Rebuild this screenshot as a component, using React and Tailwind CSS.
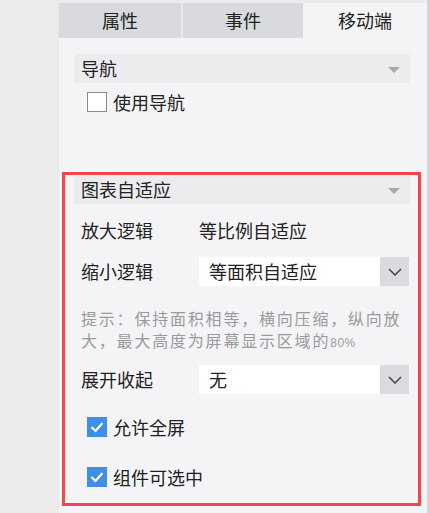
import React from "react";

const font = { fontFamily: '"Noto Sans CJK SC", "Noto Sans", sans-serif' };

function Triangle() {
  return (
    <svg width="12" height="7" viewBox="0 0 12 7" className="mr-[10px] mt-[4px]">
      <polygon points="0,0 12,0 6,6" fill="#a9a9ab" />
    </svg>
  );
}

function Chevron() {
  return (
    <svg width="14" height="8" viewBox="0 0 14 8">
      <polyline points="1,1 7,7 13,1" fill="none" stroke="#4a4a4a" strokeWidth="1.6" />
    </svg>
  );
}

function Select({ value }) {
  return (
    <div className="flex h-[29px] w-[210px]">
      <div className="flex-1 bg-white flex items-center pl-[10px] text-[18px] text-[#222]">{value}</div>
      <div className="w-[29px] bg-[#dadbdf] flex items-center justify-center">
        <Chevron />
      </div>
    </div>
  );
}

function CheckBox({ checked }) {
  if (checked) {
    return (
      <div className="w-[20px] h-[20px] bg-[#3d8fe8] flex items-center justify-center">
        <svg width="14" height="12" viewBox="0 0 14 12">
          <polyline points="1.5,6 5.5,10 12.5,2" fill="none" stroke="white" strokeWidth="2.2" />
        </svg>
      </div>
    );
  }
  return <div className="w-[20px] h-[20px] bg-white border border-[#8a8a8a]" />;
}

export default function App() {
  return (
    <div className="flex w-[429px] h-[513px] bg-[#ebebeb] overflow-hidden" style={font}>
      <div className="w-[59px] shrink-0" />
      <div className="w-[368px] shrink-0 flex flex-col pt-[3px]">
        <div className="flex h-[35px] text-[18px] text-[#222]">
          <div className="w-[122px] bg-[#d9dadd] flex items-center justify-center">属性</div>
          <div className="w-[2px] bg-[#e9e9ec]" />
          <div className="w-[120px] bg-[#d9dadd] flex items-center justify-center">事件</div>
          <div className="flex-1 bg-[#f4f4f6] flex items-center justify-center">移动端</div>
        </div>
        <div className="flex-1 bg-[#f4f4f6] flex flex-col pt-[16px]">
          <div className="ml-[15px] mr-[17px] h-[29px] bg-[#ececee] flex items-center justify-between pl-[7px] text-[18px] text-[#222]">
            <span>导航</span>
            <Triangle />
          </div>
          <div className="flex items-center ml-[28px] mt-[9px] h-[20px] gap-[6px] text-[18px] text-[#222]">
            <CheckBox checked={false} />
            <span>使用导航</span>
          </div>
          <div className="ml-[3px] mr-[6px] mt-[60px] h-[334px] border-[3px] border-[#f7434a] flex flex-col text-[18px] text-[#222]">
            <div className="ml-[9px] mr-[8px] h-[29px] bg-[#ececee] flex items-center justify-between pl-[7px]">
              <span>图表自适应</span>
              <Triangle />
            </div>
            <div className="flex items-center h-[29px] mt-[12px] pl-[16px]">
              <span className="w-[118px]">放大逻辑</span>
              <span>等比例自适应</span>
            </div>
            <div className="flex items-center h-[29px] mt-[12px] pl-[16px]">
              <span className="w-[118px]">缩小逻辑</span>
              <Select value="等面积自适应" />
            </div>
            <div className="mt-[21px] ml-[16px] h-[44px] whitespace-nowrap text-[16px] leading-[22px] tracking-[1.8px] text-[#9a9a9c]">
              提示：保持面积相等，横向压缩，纵向放
              <br />
              大，最大高度为屏幕显示区域的<span className="text-[12px] leading-none tracking-[0.5px]" style={{ fontFamily: '"Liberation Sans", sans-serif' }}>80%</span>
            </div>
            <div className="flex items-center h-[29px] mt-[14px] pl-[16px]">
              <span className="w-[118px]">展开收起</span>
              <Select value="无" />
            </div>
            <div className="flex items-center h-[20px] mt-[23px] pl-[22px] gap-[6px]">
              <CheckBox checked />
              <span>允许全屏</span>
            </div>
            <div className="flex items-center h-[20px] mt-[30px] pl-[22px] gap-[6px]">
              <CheckBox checked />
              <span>组件可选中</span>
            </div>
          </div>
        </div>
      </div>
      <div className="w-[2px] shrink-0 bg-[#d4d5d8]" />
    </div>
  );
}
